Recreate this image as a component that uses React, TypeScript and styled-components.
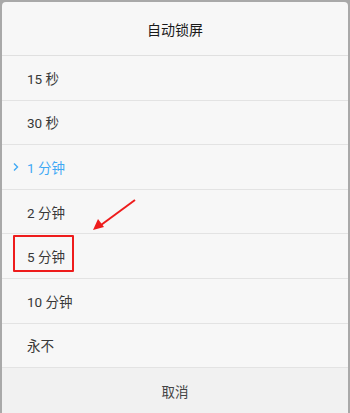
import React from "react";
import styled, { createGlobalStyle } from "styled-components";

const GlobalStyle = createGlobalStyle`
  html, body {
    margin: 0;
    padding: 0;
    background: #a9a9a9;
    font-family: Roboto, "Noto Sans CJK SC", sans-serif;
  }
`;

const Screen = styled.div`
  width: 350px;
  height: 413px;
  box-sizing: border-box;
  padding: 2px 2px 0 2px;
  overflow: hidden;
`;

const Dialog = styled.div`
  position: relative;
  display: flex;
  flex-direction: column;
  height: 100%;
  background: #f7f7f7;
  border-radius: 4px 4px 0 0;
  overflow: hidden;
`;

const Header = styled.div`
  height: 53px;
  display: flex;
  align-items: center;
  justify-content: center;
  font-size: 14px;
  color: #1a1a1a;
  border-bottom: 1px solid #e0e0e0;
`;

const Row = styled.div<{ active?: boolean }>`
  position: relative;
  height: 43.6px;
  display: flex;
  align-items: center;
  padding-left: 9px;
  font-size: 13.5px;
  color: ${p => (p.active ? "#3fa9f5" : "#383838")};
  border-bottom: 1px solid #e3e3e3;
`;

const Marker = styled.span`
  width: 16px;
  height: 10px;
  display: flex;
  align-items: center;
`;

const Highlight = styled.span`
  position: absolute;
  left: 11px;
  top: 1px;
  width: 61px;
  height: 37px;
  border: 2px solid #ee1c1c;
  border-radius: 1px;
  box-sizing: border-box;
`;

const Footer = styled.div`
  flex: 1;
  display: flex;
  align-items: center;
  justify-content: center;
  background: #f1f1f1;
  font-size: 13.5px;
  color: #444;
`;

const Pointer = styled.svg`
  position: absolute;
  left: 88px;
  top: 196px;
`;

const items = ["15 秒", "30 秒", "1 分钟", "2 分钟", "5 分钟", "10 分钟", "永不"];

export default function App() {
  return (
    <>
      <GlobalStyle />
      <Screen>
        <Dialog>
          <Header>自动锁屏</Header>
          {items.map(item => (
            <Row key={item} active={item === "1 分钟"}>
              <Marker>
                {item === "1 分钟" && (
                  <svg width="10" height="10" viewBox="0 0 10 10">
                    <path d="M3 1.5 L6.5 5 L3 8.5" fill="none" stroke="#3fa9f5" strokeWidth="1.4" />
                  </svg>
                )}
              </Marker>
              {item === "5 分钟" && <Highlight />}
              {item}
            </Row>
          ))}
          <Footer>取消</Footer>
          <Pointer width="50" height="40" viewBox="0 0 50 40">
            <line x1="45" y1="2" x2="11" y2="27" stroke="#ee1c1c" strokeWidth="2" />
            <path d="M3 32 L8 21 L14 29 Z" fill="#ee1c1c" />
          </Pointer>
        </Dialog>
      </Screen>
    </>
  );
}
